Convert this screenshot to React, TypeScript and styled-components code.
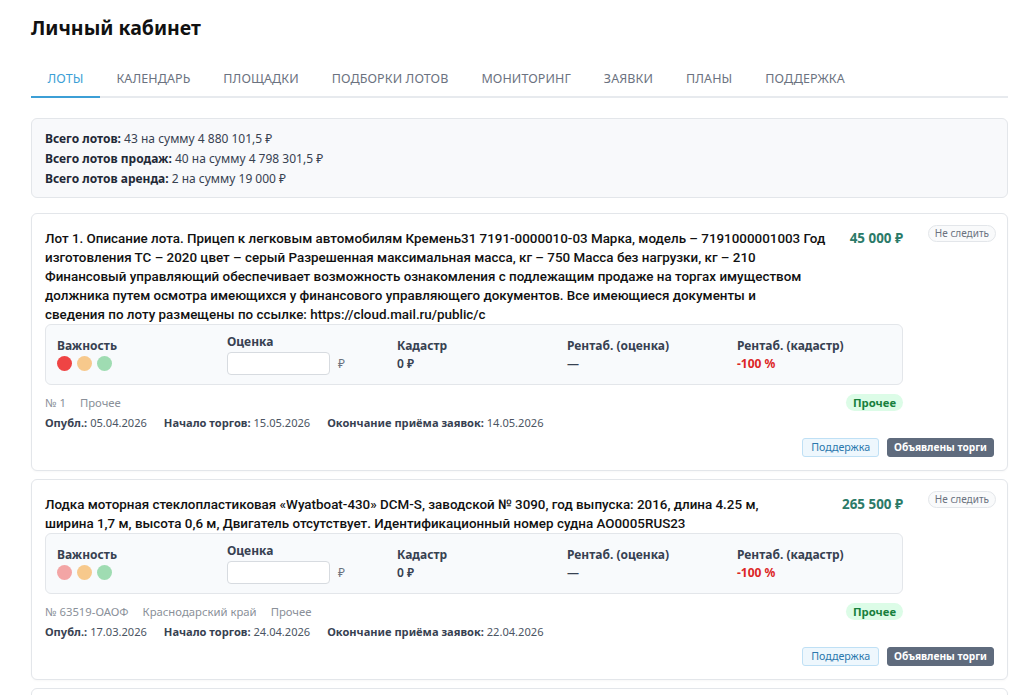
import React from "react";
import styled, { createGlobalStyle } from "styled-components";

const Global = createGlobalStyle`
  html, body { margin: 0; padding: 0; background: #fff; overflow: hidden; }
  body { font-family: "Noto Sans", "Open Sans", sans-serif; color: #1f2937; }
  * { box-sizing: border-box; }
`;

const Page = styled.div`
  padding: 14px 16px 0 31px;
`;

const Title = styled.h1`
  margin: 0;
  font-size: 19.5px;
  font-weight: 700;
  color: #111;
  line-height: 28px;
`;

const Tabs = styled.nav`
  display: flex;
  margin-top: 18px;
  border-bottom: 2px solid #e7eaee;
`;

const Tab = styled.div<{ $active?: boolean }>`
  padding: 0 16.5px;
  height: 38px;
  display: flex;
  align-items: center;
  font-size: 12.5px;
  letter-spacing: 0.1px;
  text-transform: uppercase;
  color: ${(p) => (p.$active ? "#3c9fd6" : "#6b7280")};
  margin-bottom: -2px;
  border-bottom: 2px solid ${(p) => (p.$active ? "#3c9fd6" : "transparent")};
`;

const Summary = styled.div`
  margin-top: 20px;
  background: #f8f9fb;
  border: 1px solid #e3e6ea;
  border-radius: 6px;
  padding: 10px 13px 8px;
  font-size: 12px;
  line-height: 20px;
  color: #374151;
`;

const SummaryLine = styled.div`
  b { font-weight: 700; color: #1f2937; }
`;

const Card = styled.div`
  margin-top: 15px;
  & + & { margin-top: 8px; }
  background: #fff;
  border: 1px solid #e3e6ea;
  border-radius: 6px;
  padding: 11px 11px 13px 13px;
  box-shadow: 0 1px 2px rgba(0, 0, 0, 0.03);
`;

const CardTop = styled.div`
  display: flex;
  gap: 23px;
`;

const Main = styled.div`
  flex: 1;
  min-width: 0;
  padding-top: 4px;
`;

const Aside = styled.div`
  width: 70px;
  flex: none;
  display: flex;
  justify-content: flex-end;
  align-items: flex-start;
`;

const TitleRow = styled.div`
  display: flex;
  gap: 12px;
  align-items: flex-start;
`;

const LotTitle = styled.div`
  flex: 1;
  min-width: 0;
  font-family: Roboto, "Noto Sans", sans-serif;
  font-size: 13.4px;
  font-weight: 500;
  line-height: 19px;
  color: #111;
  white-space: nowrap;
`;

const Price = styled.div`
  flex: none;
  font-size: 13.4px;
  font-weight: 700;
  line-height: 19px;
  color: #2b7a68;
`;

const WatchPill = styled.div`
  height: 17px;
  padding: 0 6px;
  border: 1px solid #e3e6ea;
  background: #f9fafb;
  border-radius: 9px;
  font-size: 10px;
  line-height: 15px;
  color: #6b7280;
  white-space: nowrap;
`;

const Metrics = styled.div`
  display: grid;
  grid-template-columns: repeat(5, 1fr);
  column-gap: 16px;
  align-items: center;
  background: #f8fafc;
  border: 1px solid #e3e6ea;
  border-radius: 6px;
  padding: 9px 11px;
  min-height: 60px;
`;

const Metric = styled.div`
  display: flex;
  flex-direction: column;
`;

const MetricLabel = styled.div`
  font-size: 12px;
  font-weight: 700;
  line-height: 16px;
  color: #374151;
`;

const MetricValue = styled.div<{ $tone?: "red" }>`
  margin-top: 2px;
  font-size: 12px;
  line-height: 16px;
  font-weight: ${(p) => (p.$tone ? 700 : 600)};
  color: ${(p) => (p.$tone === "red" ? "#dc2626" : "#374151")};
`;

const Dots = styled.div`
  margin-top: 2px;
  display: flex;
  gap: 5px;
`;

const Dot = styled.span<{ $c: string }>`
  width: 15px;
  height: 15px;
  border-radius: 50%;
  background: ${(p) => p.$c};
`;

const InputRow = styled.div`
  margin-top: 2px;
  display: flex;
  align-items: center;
  gap: 8px;
  color: #6b7280;
  font-size: 12px;
`;

const Input = styled.input`
  width: 103px;
  height: 23px;
  border: 1px solid #d7dbe0;
  border-radius: 4px;
  background: #fff;
  outline: none;
`;

const MetaRow = styled.div`
  margin-top: 9px;
  display: flex;
  align-items: center;
  justify-content: space-between;
  height: 17px;
`;

const MetaLeft = styled.div`
  display: flex;
  gap: 14px;
  font-size: 11.3px;
  color: #8a9099;
`;

const CategoryPill = styled.div`
  height: 17px;
  padding: 0 7px;
  border-radius: 9px;
  background: #dcfce7;
  color: #17803d;
  font-size: 11.3px;
  font-weight: 700;
  line-height: 17px;
`;

const Dates = styled.div`
  margin-top: 4px;
  display: flex;
  gap: 17px;
  font-size: 11.1px;
  line-height: 16px;
  color: #4b5563;
  b { font-weight: 700; color: #374151; }
`;

const Footer = styled.div`
  margin-top: 7px;
  display: flex;
  justify-content: flex-end;
  gap: 8px;
  padding-right: 2px;
`;

const Button = styled.button<{ $variant: "light" | "dark" }>`
  height: 19px;
  padding: 0 ${(p) => (p.$variant === "light" ? 8 : 6)}px;
  border-radius: 3px;
  font-family: inherit;
  font-size: ${(p) => (p.$variant === "light" ? 10.7 : 10.2)}px;
  line-height: 17px;
  border: 1px solid ${(p) => (p.$variant === "light" ? "#bfe0f5" : "#5f6b7d")};
  background: ${(p) => (p.$variant === "light" ? "#eef7fd" : "#5f6b7d")};
  color: ${(p) => (p.$variant === "light" ? "#2b77ad" : "#fff")};
  font-weight: ${(p) => (p.$variant === "light" ? 400 : 700)};
`;

type Lot = {
  title: string[];
  price: string;
  first: string;
  meta: string[];
  pub: string;
  start: string;
  end: string;
};

const lots: Lot[] = [
  {
    title: [
      "Лот 1. Описание лота. Прицеп к легковым автомобилям Кремень31 7191-0000010-03 Марка, модель – 7191000001003 Год",
      "изготовления ТС – 2020 цвет – серый Разрешенная максимальная масса, кг – 750 Масса без нагрузки, кг – 210",
      "Финансовый управляющий обеспечивает возможность ознакомления с подлежащим продаже на торгах имуществом",
      "должника путем осмотра имеющихся у финансового управляющего документов. Все имеющиеся документы и",
      "сведения по лоту размещены по ссылке: https://cloud.mail.ru/public/c",
    ],
    price: "45 000 ₽",
    first: "#ef4444",
    meta: ["№ 1", "Прочее"],
    pub: "05.04.2026",
    start: "15.05.2026",
    end: "14.05.2026",
  },
  {
    title: [
      "Лодка моторная стеклопластиковая «Wyatboat-430» DCM-S, заводской № 3090, год выпуска: 2016, длина 4.25 м,",
      "ширина 1,7 м, высота 0,6 м, Двигатель отсутствует. Идентификационный номер судна AO0005RUS23",
    ],
    price: "265 500 ₽",
    first: "#f3a5a5",
    meta: ["№ 63519-ОАОФ", "Краснодарский край", "Прочее"],
    pub: "17.03.2026",
    start: "24.04.2026",
    end: "22.04.2026",
  },
  {
    title: ["Лот 3."],
    price: "—",
    first: "#f3a5a5",
    meta: ["№ 3"],
    pub: "—",
    start: "—",
    end: "—",
  },
];

function LotCard({ lot }: { lot: Lot }) {
  return (
    <Card>
      <CardTop>
        <Main>
          <TitleRow>
            <LotTitle>
              {lot.title.map((line, i) => (
                <React.Fragment key={i}>
                  {i > 0 && <br />}
                  {line}
                </React.Fragment>
              ))}
            </LotTitle>
            <Price>{lot.price}</Price>
          </TitleRow>
          <Metrics>
            <Metric>
              <MetricLabel>Важность</MetricLabel>
              <Dots>
                <Dot $c={lot.first} />
                <Dot $c="#f7c98c" />
                <Dot $c="#9fdcb2" />
              </Dots>
            </Metric>
            <Metric>
              <MetricLabel>Оценка</MetricLabel>
              <InputRow>
                <Input aria-label="Оценка" />
                <span>₽</span>
              </InputRow>
            </Metric>
            <Metric>
              <MetricLabel>Кадастр</MetricLabel>
              <MetricValue>0 ₽</MetricValue>
            </Metric>
            <Metric>
              <MetricLabel>Рентаб. (оценка)</MetricLabel>
              <MetricValue>—</MetricValue>
            </Metric>
            <Metric>
              <MetricLabel>Рентаб. (кадастр)</MetricLabel>
              <MetricValue $tone="red">-100 %</MetricValue>
            </Metric>
          </Metrics>
          <MetaRow>
            <MetaLeft>
              {lot.meta.map((m) => (
                <span key={m}>{m}</span>
              ))}
            </MetaLeft>
            <CategoryPill>Прочее</CategoryPill>
          </MetaRow>
          <Dates>
            <span>
              <b>Опубл.:</b> {lot.pub}
            </span>
            <span>
              <b>Начало торгов:</b> {lot.start}
            </span>
            <span>
              <b>Окончание приёма заявок:</b> {lot.end}
            </span>
          </Dates>
        </Main>
        <Aside>
          <WatchPill>Не следить</WatchPill>
        </Aside>
      </CardTop>
      <Footer>
        <Button $variant="light">Поддержка</Button>
        <Button $variant="dark">Объявлены торги</Button>
      </Footer>
    </Card>
  );
}

const tabs = [
  "Лоты",
  "Календарь",
  "Площадки",
  "Подборки лотов",
  "Мониторинг",
  "Заявки",
  "Планы",
  "Поддержка",
];

export default function App() {
  return (
    <>
      <Global />
      <Page>
        <Title>Личный кабинет</Title>
        <Tabs>
          {tabs.map((t, i) => (
            <Tab key={t} $active={i === 0}>
              {t}
            </Tab>
          ))}
        </Tabs>
        <Summary>
          <SummaryLine>
            <b>Всего лотов:</b> 43 на сумму 4 880 101,5 ₽
          </SummaryLine>
          <SummaryLine>
            <b>Всего лотов продаж:</b> 40 на сумму 4 798 301,5 ₽
          </SummaryLine>
          <SummaryLine>
            <b>Всего лотов аренда:</b> 2 на сумму 19 000 ₽
          </SummaryLine>
        </Summary>
        {lots.map((l, i) => (
          <LotCard key={i} lot={l} />
        ))}
      </Page>
    </>
  );
}
